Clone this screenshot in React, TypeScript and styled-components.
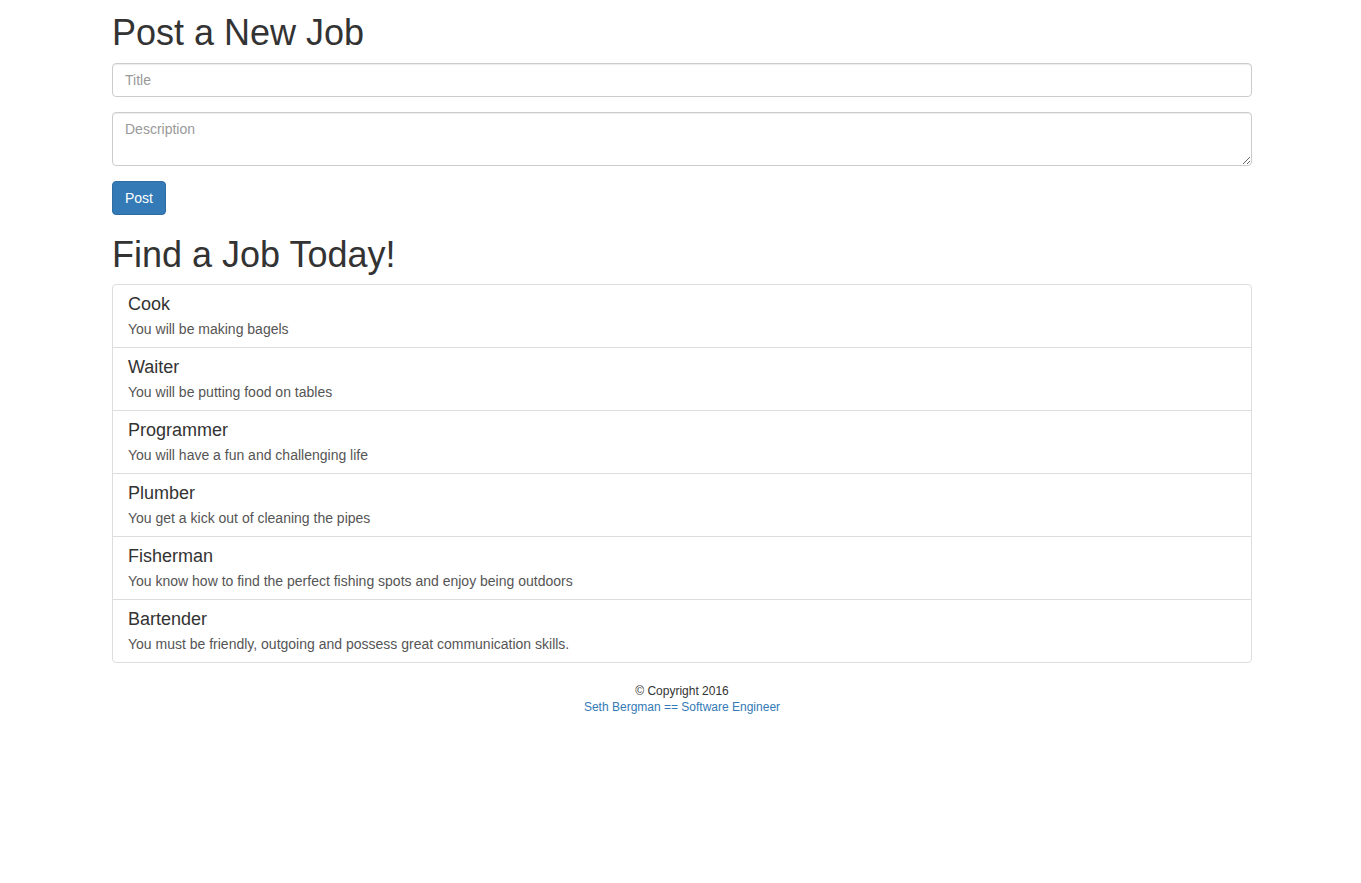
import React from "react";
import styled, { createGlobalStyle } from "styled-components";

const GlobalStyle = createGlobalStyle`
  html, body { margin: 0; }
  body {
    padding-left: 3px;
    background: #fff;
    color: #333;
    font-family: "Helvetica Neue", Helvetica, "Liberation Sans", Arial, sans-serif;
    font-size: 14px;
    line-height: 1.42857143;
  }
  * { box-sizing: border-box; }
`;

const Container = styled.div`
  width: 1170px;
  margin: 0 auto;
  padding: 0 15px;
`;

const Heading = styled.h1<{ $top: number }>`
  margin: ${(p) => p.$top}px 0 10px;
  font-size: 36px;
  font-weight: 500;
  line-height: 1.1;
  color: #333;
`;

const Form = styled.form`
  margin: 0;
`;

const FormGroup = styled.div`
  margin-bottom: 15px;
`;

const fieldBase = `
  display: block;
  width: 100%;
  padding: 6px 12px;
  font-family: inherit;
  font-size: 14px;
  line-height: 1.42857143;
  color: #555;
  background: #fff;
  border: 1px solid #ccc;
  border-radius: 4px;
  box-shadow: inset 0 1px 1px rgba(0, 0, 0, 0.075);
  outline: none;
  &::placeholder { color: #999; opacity: 1; }
`;

const Input = styled.input`
  ${fieldBase}
  height: 34px;
`;

const TextArea = styled.textarea`
  ${fieldBase}
  height: 54px;
  resize: vertical;
`;

const Button = styled.button`
  display: inline-block;
  padding: 6px 12px;
  font-family: inherit;
  font-size: 14px;
  line-height: 1.42857143;
  color: #fff;
  background: #337ab7;
  border: 1px solid #2e6da4;
  border-radius: 4px;
  cursor: pointer;
`;

const ListGroup = styled.div`
  margin-bottom: 20px;
  display: flex;
  flex-direction: column;
`;

const Item = styled.a`
  display: block;
  padding: 10px 15px 9px;
  margin-bottom: -1px;
  background: #fff;
  border: 1px solid #ddd;
  color: #555;
  text-decoration: none;
  &:first-child {
    border-top-left-radius: 4px;
    border-top-right-radius: 4px;
  }
  &:last-child {
    margin-bottom: 0;
    border-bottom-left-radius: 4px;
    border-bottom-right-radius: 4px;
  }
`;

const ItemHeading = styled.h4`
  margin: 0 0 5px;
  font-size: 18px;
  font-weight: 500;
  line-height: 1.1;
  color: #333;
`;

const ItemText = styled.p`
  margin: 0;
  line-height: 1.3;
`;

const Footer = styled.footer`
  text-align: center;
  font-size: 12px;
  line-height: 16px;
  color: #333;
`;

const FooterLine = styled.div``;

const FooterLink = styled.a`
  color: #337ab7;
  text-decoration: none;
`;

const jobs = [
  { title: "Cook", desc: "You will be making bagels" },
  { title: "Waiter", desc: "You will be putting food on tables" },
  { title: "Programmer", desc: "You will have a fun and challenging life" },
  { title: "Plumber", desc: "You get a kick out of cleaning the pipes" },
  {
    title: "Fisherman",
    desc: "You know how to find the perfect fishing spots and enjoy being outdoors",
  },
  {
    title: "Bartender",
    desc: "You must be friendly, outgoing and possess great communication skills.",
  },
];

export default function App() {
  return (
    <>
      <GlobalStyle />
      <Container>
        <Heading $top={13}>Post a New Job</Heading>
        <Form onSubmit={(e) => e.preventDefault()}>
          <FormGroup>
            <Input type="text" placeholder="Title" />
          </FormGroup>
          <FormGroup>
            <TextArea placeholder="Description" rows={2} />
          </FormGroup>
          <Button type="submit">Post</Button>
        </Form>
        <Heading $top={20}>Find a Job Today!</Heading>
        <ListGroup>
          {jobs.map((j) => (
            <Item key={j.title}>
              <ItemHeading>{j.title}</ItemHeading>
              <ItemText>{j.desc}</ItemText>
            </Item>
          ))}
        </ListGroup>
        <Footer>
          <FooterLine>© Copyright 2016</FooterLine>
          <FooterLine>
            <FooterLink href="#">Seth Bergman == Software Engineer</FooterLink>
          </FooterLine>
        </Footer>
      </Container>
    </>
  );
}
